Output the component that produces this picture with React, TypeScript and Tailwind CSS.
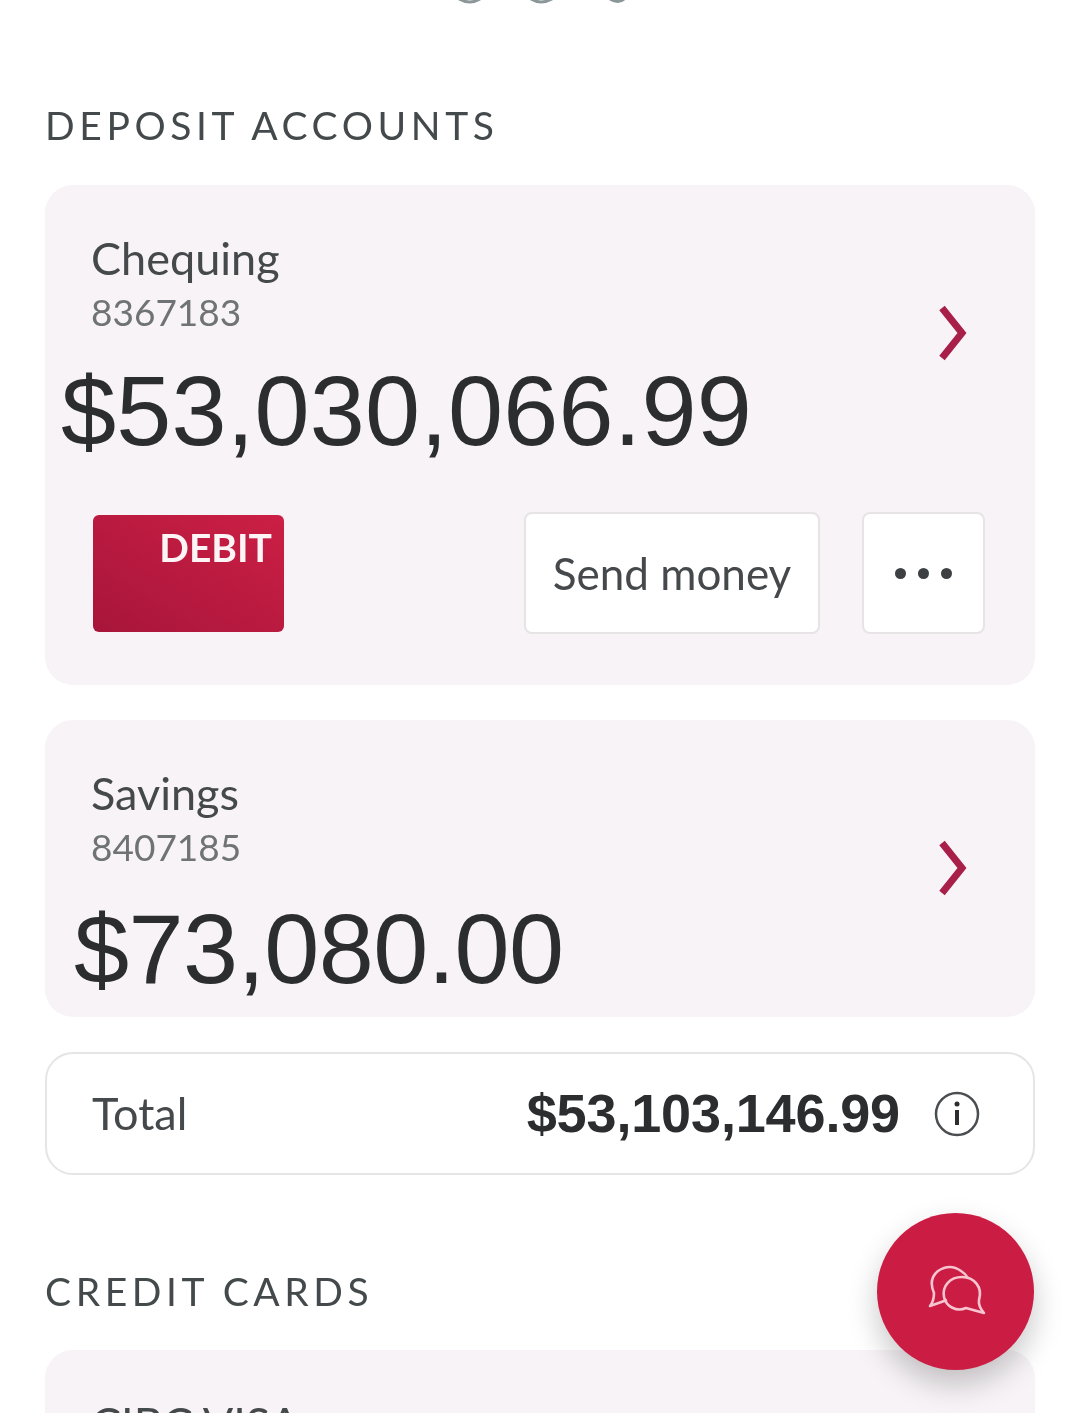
import React from "react";

const Chevron = () => (
  <svg width="34" height="56" viewBox="0 0 34 56" fill="none" className="-ml-[4px] text-[#a8204a]">
    <path d="M4 3 L24 28 L4 53" stroke="currentColor" strokeWidth="7" strokeLinejoin="miter" />
  </svg>
);

export default function App() {
  return (
    <div className="relative h-[1413px] w-[1080px] overflow-hidden bg-white font-['Lato','Liberation_Sans',sans-serif] blur-[0.6px]">
      <svg className="absolute left-[455px] top-0" width="180" height="8" viewBox="0 0 180 8" fill="none" stroke="#8a9698" strokeWidth="3">
        <path d="M4 -1 Q15 5 25 -1" />
        <path d="M76 -1 Q86 5 97 -1" />
        <path d="M155 -1 Q163 4 169 -1" />
      </svg>

      <div className="flex flex-col px-[45px] pt-[101px]">
        <h2 className="h-[48px] text-[39px] leading-[48px] font-normal tracking-[4.6px] text-[#444a4c] whitespace-nowrap">DEPOSIT ACCOUNTS</h2>

        <section className="mt-[36px] h-[500px] rounded-[28px] bg-[#f7f3f6]">
          <div className="flex h-[300px] items-start justify-between pr-[63px]">
            <div className="flex flex-col">
              <div className="pl-[46px] pt-[45px] text-[45px] leading-[56px] text-[#45494b]">Chequing</div>
              <div className="pl-[46px] mt-[3px] text-[37px] leading-[46px] text-[#6f7375]">8367183</div>
              <div className="pl-[16px] mt-[24px] font-['Liberation_Sans',sans-serif] text-[99px] leading-[104px] tracking-[0.2px] text-[#2b2d2f] whitespace-nowrap">$53,030,066.99</div>
            </div>
            <div className="mt-[120px]"><Chevron /></div>
          </div>
          <div className="mt-[27px] flex items-start justify-between pl-[48px] pr-[50px]">
            <div className="mt-[3px] flex h-[117px] w-[191px] justify-end rounded-[6px] bg-gradient-to-tr from-[#a8153a] to-[#cc1f45] pr-[12px] pt-[8px] text-[39px] leading-[48px] font-bold text-[#fdf4f6]">DEBIT</div>
            <div className="flex gap-[42px]">
              <button className="flex h-[122px] w-[296px] items-center justify-center rounded-[8px] border-2 border-[#e6e4e4] bg-white text-[44px] text-[#45494b]">Send money</button>
              <button className="flex h-[122px] w-[123px] items-center justify-center gap-[12px] rounded-[8px] border-2 border-[#e6e4e4] bg-white">
                <span className="h-[11px] w-[11px] rounded-full bg-[#3c4042]" />
                <span className="h-[11px] w-[11px] rounded-full bg-[#3c4042]" />
                <span className="h-[11px] w-[11px] rounded-full bg-[#3c4042]" />
              </button>
            </div>
          </div>
        </section>

        <section className="mt-[35px] flex h-[297px] items-start justify-between rounded-[28px] bg-[#f7f3f6] pr-[63px]">
          <div className="flex flex-col">
            <div className="pl-[46px] pt-[45px] text-[45px] leading-[56px] text-[#45494b]">Savings</div>
            <div className="pl-[46px] mt-[3px] text-[37px] leading-[46px] text-[#6f7375]">8407185</div>
            <div className="pl-[29px] mt-[27px] font-['Liberation_Sans',sans-serif] text-[99px] leading-[104px] tracking-[-0.6px] text-[#2b2d2f] whitespace-nowrap">$73,080.00</div>
          </div>
          <div className="mt-[120px]"><Chevron /></div>
        </section>

        <section className="mt-[35px] flex h-[123px] items-center justify-between rounded-[28px] border-2 border-[#e6e5e5] pl-[45px] pr-[53px]">
          <span className="text-[45px] text-[#45494b]">Total</span>
          <div className="flex items-center gap-[34px]">
            <span className="font-['Liberation_Sans',sans-serif] text-[54px] font-bold tracking-[-0.15px] text-[#2b2d2f]">$53,103,146.99</span>
            <svg width="46" height="46" viewBox="0 0 46 46" fill="none">
              <circle cx="23" cy="23" r="21" stroke="#4a4e50" strokeWidth="2.5" />
              <circle cx="23" cy="13" r="2.5" fill="#2b2d2f" />
              <rect x="21" y="19" width="4" height="15" fill="#2b2d2f" />
            </svg>
          </div>
        </section>

        <h2 className="mt-[92px] h-[48px] text-[39px] leading-[48px] font-normal tracking-[4.6px] text-[#444a4c] whitespace-nowrap">CREDIT CARDS</h2>

        <section className="mt-[35px] h-[200px] rounded-[28px] bg-[#f7f3f6] pl-[46px] pt-[45px] text-[45px] leading-[56px] text-[#45494b]">CIBC VISA</section>
      </div>

      <button className="absolute left-[877px] top-[1213px] flex h-[157px] w-[157px] items-center justify-center rounded-full bg-[#cb1c43] shadow-[0_14px_30px_rgba(0,0,0,0.22)]">
        <svg width="60" height="60" viewBox="0 0 60 60" fill="none" stroke="#f7c4d0" strokeWidth="2.6" strokeLinejoin="round">
          <path d="M21 38 L4 44 Q8 39 8 31 Q2 17 12 9 Q24 1 35 9 Q40 12 42 16" />
          <path d="M36 15 C24 15 16 24 18 35 C20 45 31 50 40 46 L58 51 Q52 44 53 38 C57 25 48 15 36 15 Z" />
        </svg>
      </button>
    </div>
  );
}
